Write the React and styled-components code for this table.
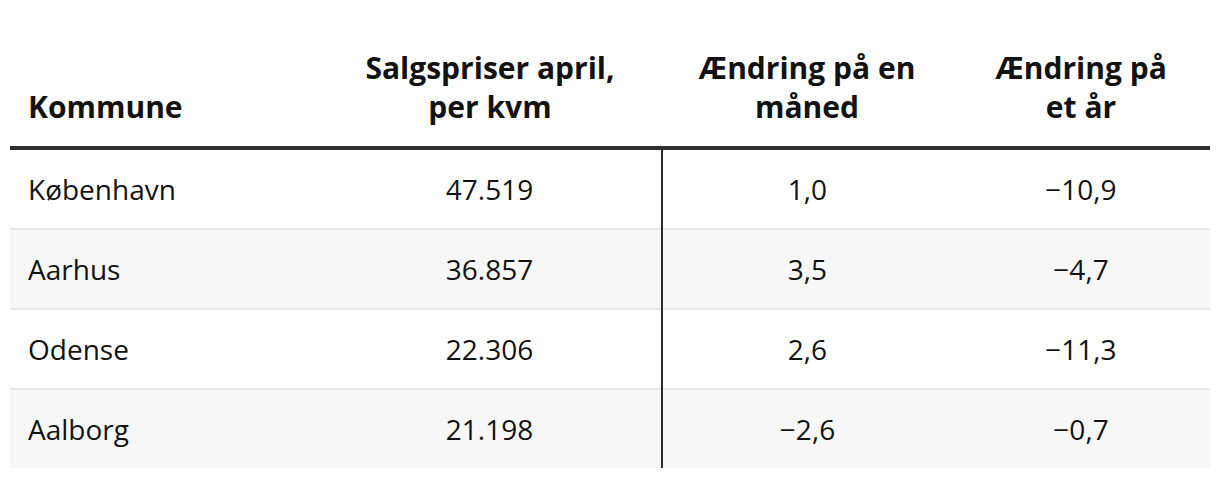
import React from 'react';
import styled, { createGlobalStyle } from 'styled-components';

const GlobalStyle = createGlobalStyle`
  body {
    margin: 0;
    background: #fff;
    font-family: "Open Sans", "Liberation Sans", sans-serif;
    color: #121212;
  }
`;

const Wrapper = styled.div`
  padding: 0 10px;
`;

const Table = styled.table`
  width: 1200px;
  border-collapse: collapse;
  table-layout: fixed;
  font-size: 28px;
  line-height: 40px;
`;

const Th = styled.th`
  font-size: 30px;
  line-height: 39px;
  font-weight: 700;
  text-align: ${(p) => (p.$left ? 'left' : 'center')};
  vertical-align: bottom;
  padding: 48px 18px 20px;
  border-bottom: 4px solid #2e2e2e;
`;

const Row = styled.tr`
  background: ${(p) => (p.$shaded ? '#f7f7f7' : '#fff')};
`;

const Td = styled.td`
  height: 78px;
  padding: 0 18px;
  text-align: ${(p) => (p.$left ? 'left' : 'center')};
  vertical-align: middle;
  font-weight: 400;
  border-top: ${(p) => (p.$sep ? '2px solid #e8e8e8' : 'none')};
  border-right: ${(p) => (p.$divider ? '2px solid #2e2e2e' : 'none')};
`;

const rows = [
  ['København', '47.519', '1,0', '−10,9'],
  ['Aarhus', '36.857', '3,5', '−4,7'],
  ['Odense', '22.306', '2,6', '−11,3'],
  ['Aalborg', '21.198', '−2,6', '−0,7'],
];

export default function App() {
  return (
    <Wrapper>
      <GlobalStyle />
      <Table>
        <colgroup>
          <col style={{ width: 308 }} />
          <col style={{ width: 344 }} />
          <col style={{ width: 290 }} />
          <col style={{ width: 258 }} />
        </colgroup>
        <thead>
          <tr>
            <Th $left>Kommune</Th>
            <Th>Salgspriser april,<br />per kvm</Th>
            <Th>Ændring på en<br />måned</Th>
            <Th>Ændring på<br />et år</Th>
          </tr>
        </thead>
        <tbody>
          {rows.map((r, i) => (
            <Row key={r[0]} $shaded={i % 2 === 1}>
              <Td $left $sep={i > 0}>{r[0]}</Td>
              <Td $divider $sep={i > 0}>{r[1]}</Td>
              <Td $sep={i > 0}>{r[2]}</Td>
              <Td $sep={i > 0}>{r[3]}</Td>
            </Row>
          ))}
        </tbody>
      </Table>
    </Wrapper>
  );
}
